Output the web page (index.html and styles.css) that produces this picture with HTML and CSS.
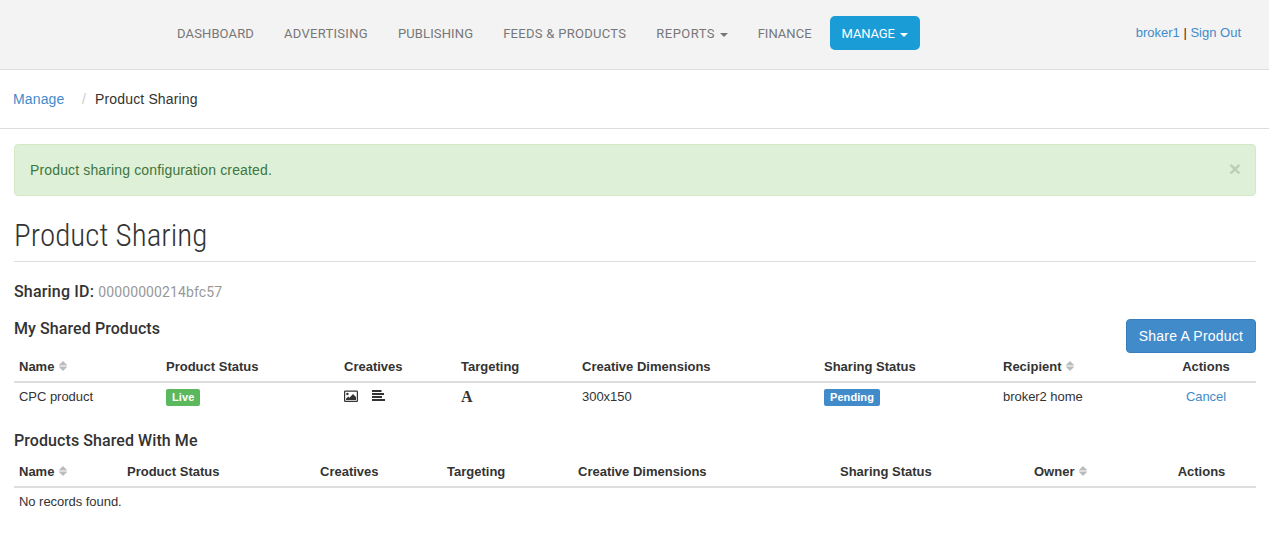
FILE: index.html
```html
<!DOCTYPE html>
<html lang="en">

<head>
    <meta charset="UTF-8">
    <meta name="viewport" content="width=device-width, initial-scale=1.0">
    <title>Product Sharing</title>
    <link rel="stylesheet" href="styles.css">
</head>

<body>
    <!-- shared icon shapes -->
    <svg class="sprite" width="0" height="0">
        <symbol id="sort" viewBox="0 0 8 10">
            <path d="M4 0 L8 4 V4.4 H0 V4 Z M0 5.6 H8 V6 L4 10 L0 6 Z"/>
        </symbol>
    </svg>

    <header class="header">
        <nav class="nav">
            <a href="#">Dashboard</a>
            <a href="#" class="wide">Advertising</a>
            <a href="#">Publishing</a>
            <a href="#" class="wide">Feeds &amp; Products</a>
            <a href="#" class="wider">Reports <b class="caret"></b></a>
            <a href="#" class="plain">Finance</a>
            <a href="#" class="active">Manage <b class="caret"></b></a>
        </nav>
        <div class="user"><a href="#">broker1</a> | <a href="#">Sign Out</a></div>
    </header>

    <ol class="breadcrumb">
        <li><a href="#">Manage</a></li>
        <li>Product Sharing</li>
    </ol>

    <main class="content">
        <div class="alert">
            <span>Product sharing configuration created.</span>
            <button type="button" class="close">×</button>
        </div>

        <h1 class="title">Product Sharing</h1>

        <h4 class="sharing-id">Sharing ID: <small>00000000214bfc57</small></h4>

        <div class="section-head">
            <h4>My Shared Products</h4>
            <a href="#" class="btn">Share A Product</a>
        </div>
        <table class="table shared">
            <thead>
                <tr>
                    <th class="name">Name <svg class="sort"><use href="#sort"/></svg></th>
                    <th class="status">Product Status</th>
                    <th class="creatives">Creatives</th>
                    <th class="targeting">Targeting</th>
                    <th class="dimensions">Creative Dimensions</th>
                    <th class="sharing">Sharing Status</th>
                    <th class="person">Recipient <svg class="sort"><use href="#sort"/></svg></th>
                    <th class="actions">Actions</th>
                </tr>
            </thead>
            <tbody>
                <tr>
                    <td>CPC product</td>
                    <td><span class="label live">Live</span></td>
                    <td>
                        <div class="icons">
                            <svg width="14" height="12" viewBox="0 0 14 12">
                                <rect x=".6" y=".1" width="12.8" height="10.3" rx=".6" fill="none" stroke="currentColor" stroke-width="1.2"/>
                                <circle cx="3.4" cy="3" r="1.2"/>
                                <path d="M2 9.1 V7.7 L4.2 5.5 L5.4 6.7 L9 3.1 L12 5.9 V9.1 Z"/>
                            </svg>
                            <svg width="14" height="12" viewBox="0 0 14 12">
                                <path d="M0 -1 H9.5 V1 H0 Z M0 2 H12 V4 H0 Z M0 5 H10 V7 H0 Z M0 8 H13 V10 H0 Z"/>
                            </svg>
                        </div>
                    </td>
                    <td><span class="font-icon">A</span></td>
                    <td>300x150</td>
                    <td><span class="label pending">Pending</span></td>
                    <td>broker2 home</td>
                    <td class="actions"><a href="#">Cancel</a></td>
                </tr>
            </tbody>
        </table>

        <h4 class="with-me">Products Shared With Me</h4>
        <table class="table received">
            <thead>
                <tr>
                    <th class="name">Name <svg class="sort"><use href="#sort"/></svg></th>
                    <th class="status">Product Status</th>
                    <th class="creatives">Creatives</th>
                    <th class="targeting">Targeting</th>
                    <th class="dimensions">Creative Dimensions</th>
                    <th class="sharing">Sharing Status</th>
                    <th class="person">Owner <svg class="sort"><use href="#sort"/></svg></th>
                    <th class="actions">Actions</th>
                </tr>
            </thead>
            <tbody>
                <tr>
                    <td colspan="8">No records found.</td>
                </tr>
            </tbody>
        </table>
    </main>
</body>

</html>
```
FILE: styles.css
```css
* {
    box-sizing: border-box;
}

body {
    margin: 0;
    background: #fff;
    color: #333;
    font-family: "Liberation Sans", Arial, sans-serif;
    font-size: 14px;
    line-height: 20px;
}

a {
    color: #428bca;
    text-decoration: none;
}

h1, h4 {
    margin: 0;
    font-family: Roboto, sans-serif;
    font-weight: 500;
}

h4 {
    font-size: 16px;
    letter-spacing: .08px;
    line-height: 20px;
}

.sprite {
    position: absolute;
}

/* Header */
.header {
    display: flex;
    justify-content: space-between;
    height: 70px;
    padding: 16px 28px 0 165px;
    background: #f3f3f3;
    border-bottom: 1px solid #ddd;
}

.nav {
    display: flex;
    gap: 6px;
}

.nav a {
    height: 34px;
    padding: 0 12px;
    border-radius: 5px;
    color: #777;
    font-family: Roboto, sans-serif;
    font-size: 13px;
    letter-spacing: .13px;
    line-height: 35px;
    text-transform: uppercase;
}

.nav .wide {
    letter-spacing: .29px;
}

.nav .wider {
    letter-spacing: .46px;
}

.nav .plain {
    letter-spacing: .03px;
}

.nav .active {
    background: #1a9cd6;
    color: #fff;
    letter-spacing: -.12px;
}

.caret {
    display: inline-block;
    margin-left: 2px;
    vertical-align: middle;
    border-top: 4px solid;
    border-left: 4px solid transparent;
    border-right: 4px solid transparent;
}

.wider .caret {
    margin-left: 1px;
}

.user {
    padding-top: 7px;
    font-size: 13px;
    color: #631d12;
}

/* Breadcrumb */
.breadcrumb {
    display: flex;
    height: 59px;
    margin: 0;
    padding: 19px 13px;
    border-bottom: 1px solid #ddd;
    letter-spacing: .15px;
    list-style: none;
}

.breadcrumb li + li::before {
    content: "/";
    padding: 0 9px 0 17.5px;
    color: #ccc;
}

.content {
    padding: 15px 13px 0 14px;
}

.alert {
    display: flex;
    justify-content: space-between;
    height: 52px;
    padding: 15px 14px 15px 15px;
    background: #dff0d8;
    border: 1px solid #d6e9c6;
    border-radius: 4px;
    color: #3c763d;
    letter-spacing: .14px;
}

.close {
    height: 18px;
    padding: 0;
    border: 0;
    background: none;
    color: #000;
    font: bold 21px/16px "Liberation Sans", Arial, sans-serif;
    opacity: .15;
}

.title {
    height: 66px;
    padding-top: 20px;
    border-bottom: 1px solid #ddd;
    font-family: "Roboto Condensed", Roboto, sans-serif;
    font-size: 31px;
    font-stretch: condensed;
    font-weight: 300;
    letter-spacing: .06px;
    line-height: 40px;
}

.sharing-id {
    margin-top: 20px;
    letter-spacing: .18px;
}

.sharing-id small {
    color: #999;
    font-size: 14px;
    font-weight: 400;
    letter-spacing: .11px;
}

.section-head {
    display: flex;
    justify-content: space-between;
    height: 34px;
    margin-top: 17px;
}

.btn {
    height: 34px;
    padding: 6px 12px;
    background: #428bca;
    border: 1px solid #357ebd;
    border-radius: 4px;
    color: #fff;
    letter-spacing: .2px;
}

/* Tables */
.table {
    width: 100%;
    table-layout: fixed;
    border-collapse: collapse;
    font-size: 13px;
    line-height: 18px;
}

.table th,
.table td {
    padding: 5px;
    text-align: left;
    vertical-align: top;
}

.table th {
    border-bottom: 2px solid #ddd;
}

.table td {
    letter-spacing: -.04px;
}

.table .actions {
    text-align: center;
}

.shared .name { width: 147px; }
.shared .status { width: 178px; }
.shared .creatives { width: 117px; }
.shared .targeting { width: 121px; }
.shared .dimensions { width: 242px; }
.shared .sharing { width: 179px; }
.shared .person { width: 158px; }

.received .name { width: 108px; }
.received .status { width: 193px; }
.received .creatives { width: 127px; }
.received .targeting { width: 131px; }
.received .dimensions { width: 262px; }
.received .sharing { width: 194px; }
.received .person { width: 118px; }

.sort {
    width: 8px;
    height: 10px;
    margin-left: 1px;
    fill: #bbb;
}

.label {
    display: inline-block;
    height: 17px;
    margin-top: 1px;
    padding: 0 6px;
    border-radius: 2px;
    color: #fff;
    font-size: 11px;
    font-weight: bold;
    letter-spacing: .08px;
    line-height: 17px;
    vertical-align: top;
}

.live {
    background: #5cb85c;
}

.pending {
    background: #428bca;
}

.icons {
    display: flex;
    gap: 14px;
    padding-top: 3px;
    fill: currentColor;
}

.icons svg {
    overflow: visible;
}

.font-icon {
    font-family: "Liberation Serif", serif;
    font-size: 16px;
    font-weight: bold;
}

.with-me {
    margin: 19px 0 7px;
}
```
